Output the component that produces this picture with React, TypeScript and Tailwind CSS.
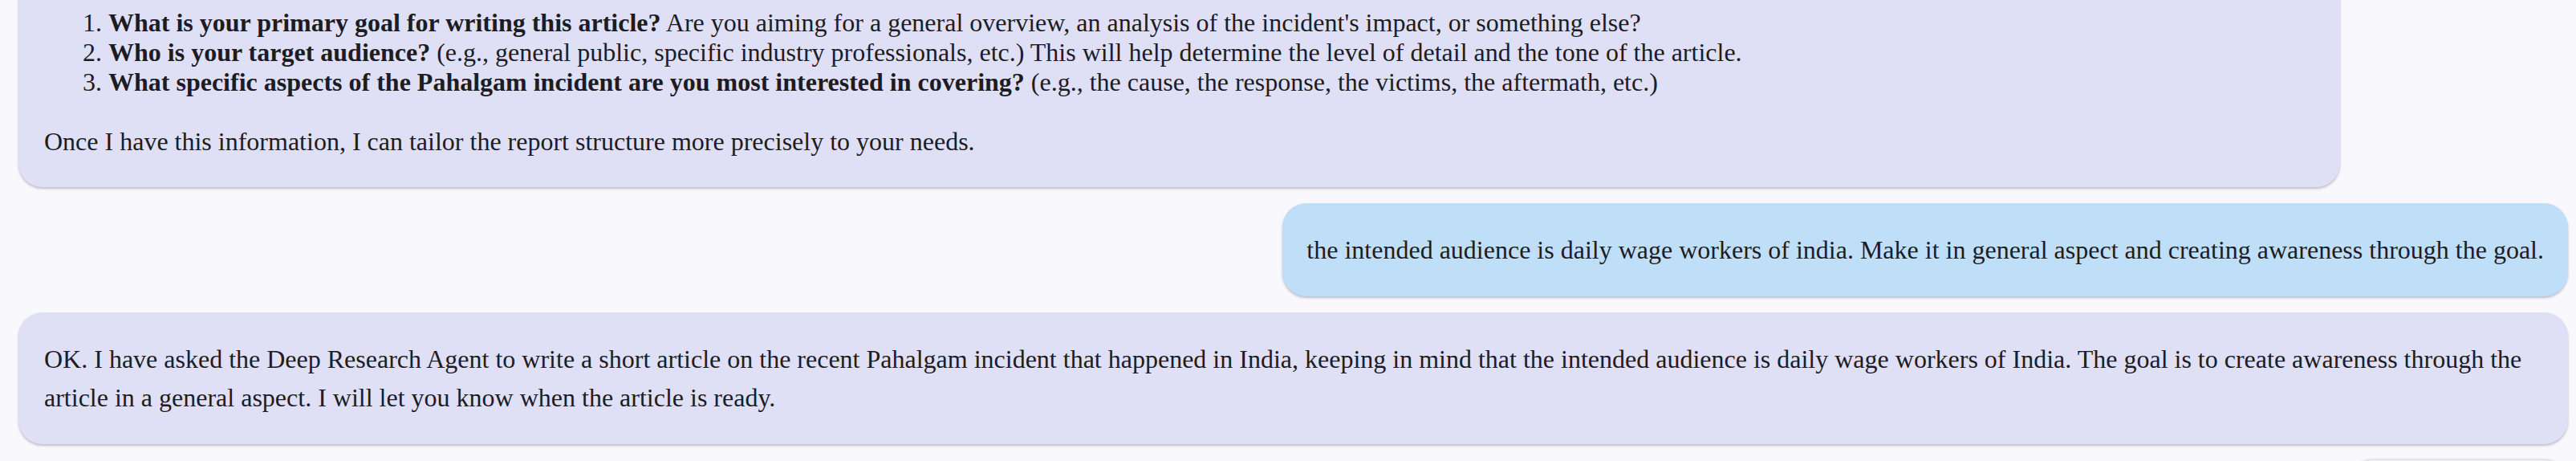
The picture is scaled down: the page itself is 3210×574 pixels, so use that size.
const serif = "font-['Liberation_Serif','Times_New_Roman',serif]";

function BotBubble({ children, className = "" }: { children: React.ReactNode; className?: string }) {
  return (
    <div
      className={`rounded-[30px] bg-[#dfe0f5] px-[32px] text-[32px] text-[#1d1c24] shadow-[0_2px_3px_rgba(40,40,70,0.28)] ${className}`}
    >
      {children}
    </div>
  );
}

export default function App() {
  return (
    <div className={`h-[574px] w-full overflow-hidden bg-[#f9f8fc] ${serif}`}>
      <div className="flex flex-col gap-[20px] pl-[23px] pr-[10px]">
        {/* earlier reply, scrolled partly out of view */}
        <BotBubble className="-mt-[40px] w-[2893px] pt-[50px] pb-[33px]">
          <ol className="list-decimal pl-[80px] leading-[37px]">
            <li>
              <b>What is your primary goal for writing this article?</b> Are you aiming for a general
              overview, an analysis of the incident's impact, or something else?
            </li>
            <li>
              <b>Who is your target audience?</b> (e.g., general public, specific industry professionals,
              etc.) This will help determine the level of detail and the tone of the article.
            </li>
            <li>
              <b>What specific aspects of the Pahalgam incident are you most interested in covering?</b>{" "}
              (e.g., the cause, the response, the victims, the aftermath, etc.)
            </li>
          </ol>
          <p className="mt-[31px] leading-[48px]">
            Once I have this information, I can tailor the report structure more precisely to your needs.
          </p>
        </BotBubble>

        <div className="flex justify-end">
          <div className="rounded-[30px] bg-[#bfdff9] px-[30px] py-[34px] text-[32px] leading-[48px] text-[#1d1c24] shadow-[0_2px_3px_rgba(40,40,70,0.28)]">
            the intended audience is daily wage workers of india. Make it in general aspect and creating
            awareness through the goal.
          </div>
        </div>

        <BotBubble className="py-[34px] leading-[48px]">
          <p>
            OK. I have asked the Deep Research Agent to write a short article on the recent Pahalgam incident
            that happened in India, keeping in mind that the intended audience is daily wage workers of India.
            The goal is to create awareness through the article in a general aspect. I will let you know when
            the article is ready.
          </p>
        </BotBubble>

        <div className="flex justify-end">
          <div className="h-[60px] w-[273px] rounded-[30px] bg-[#f4f3f8] shadow-[0_-1px_3px_rgba(40,40,70,0.2)]" />
        </div>
      </div>
    </div>
  );
}
